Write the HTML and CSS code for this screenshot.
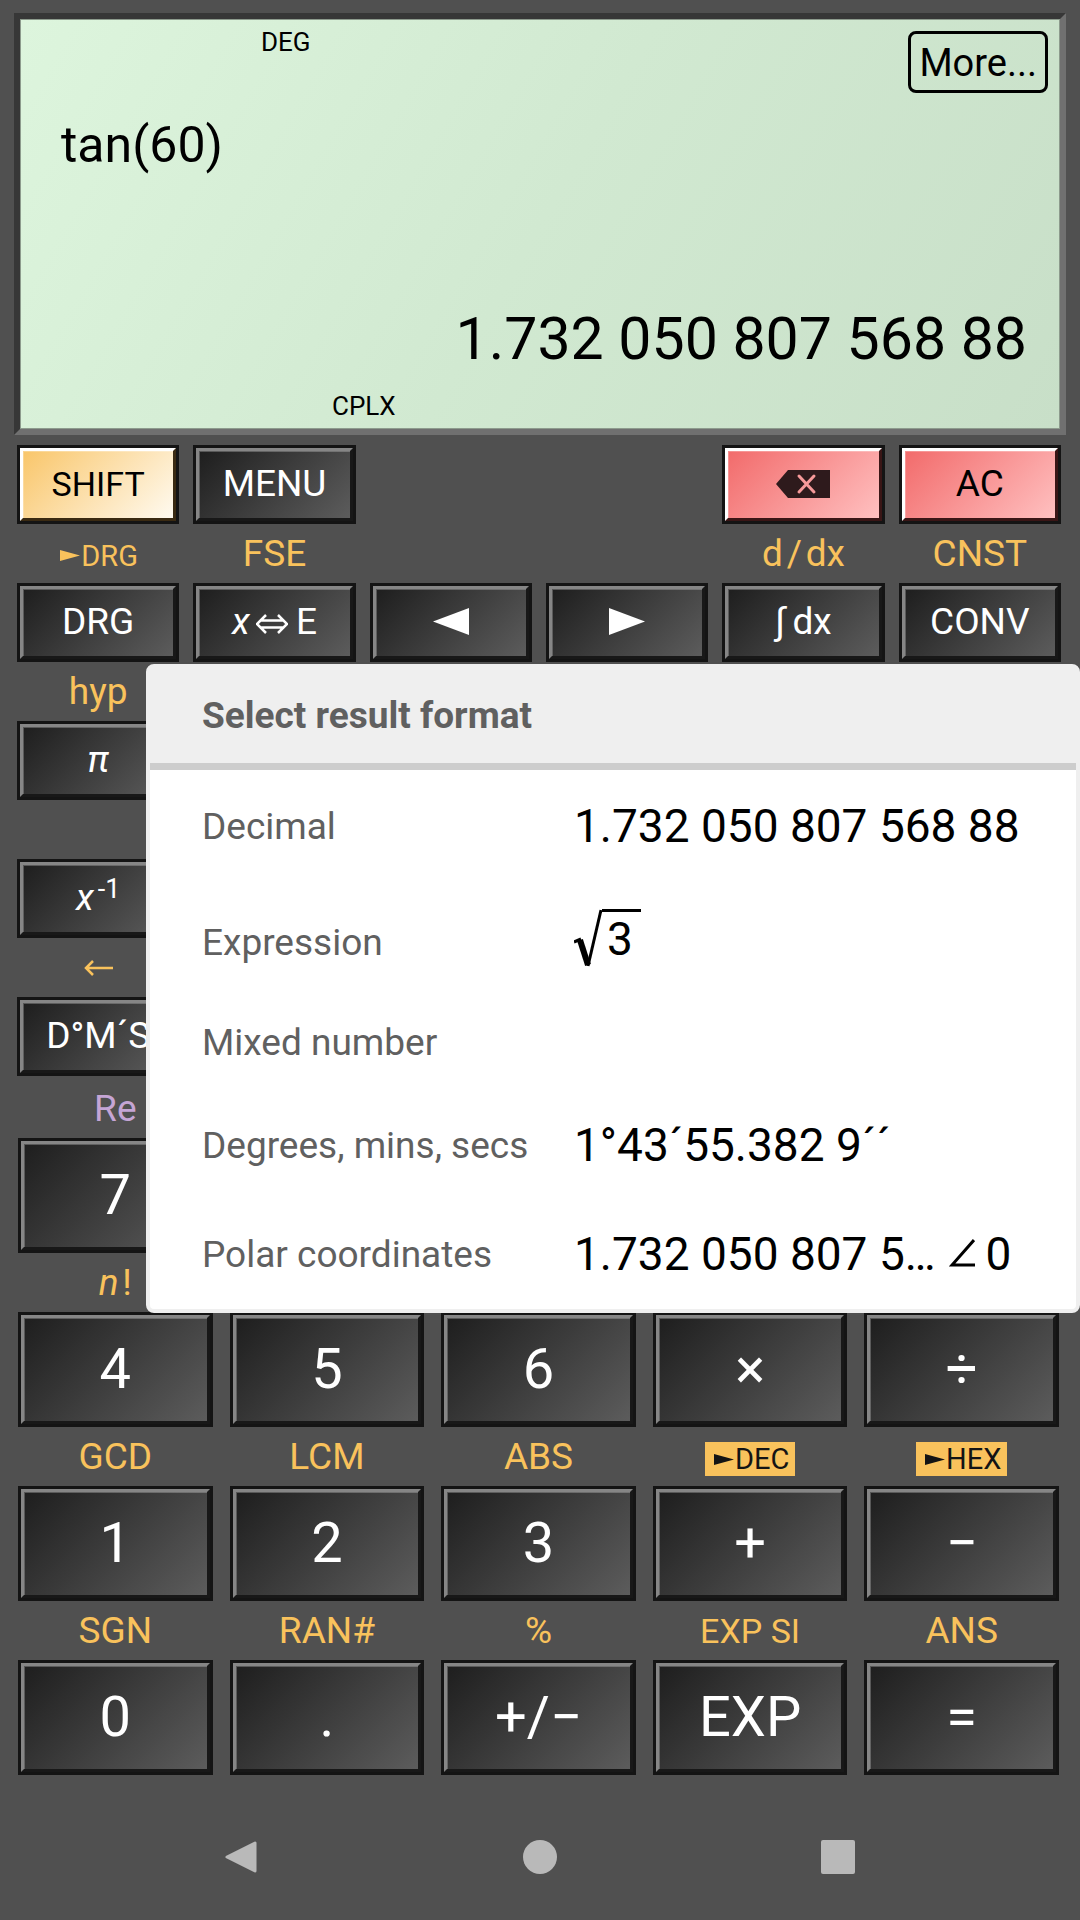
FILE: index.html
```html
<!DOCTYPE html>
<html lang="en">
<head>
<meta charset="utf-8">
<meta name="viewport" content="width=device-width, initial-scale=1">
<title>Calculator</title>
<link rel="stylesheet" href="styles.css">
</head>
<body>
<main class="calculator">
  <section class="display">
    <div class="display-top">
      <span class="indicator indicator-angle">DEG</span>
      <button class="more" type="button">More...</button>
    </div>
    <div class="entry">tan(60)</div>
    <output class="result">1.732 050 807 568 88</output>
    <span class="indicator indicator-complex">CPLX</span>
  </section>

  <section class="keys keys-function">
    <button class="key key-shift" type="button">SHIFT</button>
    <button class="key" type="button">MENU</button>
    <button class="key key-red col-5" type="button" aria-label="Backspace">
      <svg width="56" height="28" viewBox="0 0 56 28"><path d="M1 14 13 0H55V28H13Z" fill="#2e1a1c"/><path d="M24 6 39 22M39 6 24 22" stroke="#f79a9a" stroke-width="3" stroke-linecap="round"/></svg>
    </button>
    <button class="key key-red" type="button">AC</button>

    <span class="label label-small"><svg class="pointer" width="20" height="11" viewBox="0 0 20 11"><path d="M0 0 20 5.500 0 11Z" fill="currentColor"/></svg>DRG</span>
    <span class="label">FSE</span>
    <span class="label col-5">d&#8202;/&#8202;dx</span>
    <span class="label">CNST</span>

    <button class="key" type="button">DRG</button>
    <button class="key" type="button"><i>x</i><svg class="swap" width="32" height="20" viewBox="0 0 32 20" fill="none" stroke="currentColor" stroke-width="2.500"><path d="M10 1 1 10 10 19M22 1 31 10 22 19M5 6.500H27M5 13.500H27"/></svg>E</button>
    <button class="key" type="button" aria-label="Left"><svg width="36" height="27" viewBox="0 0 36 27"><path d="M36 0V27L0 13.500Z" fill="#fff"/></svg></button>
    <button class="key" type="button" aria-label="Right"><svg width="36" height="27" viewBox="0 0 36 27"><path d="M0 0V27L36 13.500Z" fill="#fff"/></svg></button>
    <button class="key" type="button">∫&#8201;dx</button>
    <button class="key" type="button">CONV</button>

    <span class="label col-1">hyp</span>
    <button class="key col-1" type="button"><i>π</i></button>
    <span class="label col-1"></span>
    <button class="key col-1" type="button"><i>x</i><span class="power">-1</span></button>
    <span class="label col-1"><svg width="29" height="16" viewBox="0 0 29 16" fill="none" stroke="currentColor" stroke-width="2.500"><path d="M9 1 2 8 9 15M2 8H29"/></svg></span>
    <button class="key col-1" type="button">D°M´S</button>
  </section>

  <section class="keys keys-number">
    <span class="label label-complex col-1">Re</span>
    <button class="key col-1" type="button">7</button>
    <span class="label col-1"><i>n</i>&#8202;!</span>

    <button class="key col-1" type="button">4</button>
    <button class="key" type="button">5</button>
    <button class="key" type="button">6</button>
    <button class="key" type="button">×</button>
    <button class="key" type="button">÷</button>

    <span class="label">GCD</span>
    <span class="label">LCM</span>
    <span class="label">ABS</span>
    <span class="label"><span class="badge"><svg class="pointer" width="20" height="11" viewBox="0 0 20 11"><path d="M0 0 20 5.500 0 11Z" fill="currentColor"/></svg>DEC</span></span>
    <span class="label"><span class="badge"><svg class="pointer" width="20" height="11" viewBox="0 0 20 11"><path d="M0 0 20 5.500 0 11Z" fill="currentColor"/></svg>HEX</span></span>

    <button class="key" type="button">1</button>
    <button class="key" type="button">2</button>
    <button class="key" type="button">3</button>
    <button class="key" type="button">+</button>
    <button class="key" type="button">−</button>

    <span class="label">SGN</span>
    <span class="label">RAN#</span>
    <span class="label">%</span>
    <span class="label label-medium">EXP SI</span>
    <span class="label">ANS</span>

    <button class="key" type="button">0</button>
    <button class="key" type="button">.</button>
    <button class="key" type="button">+/−</button>
    <button class="key" type="button">EXP</button>
    <button class="key" type="button">=</button>
  </section>

  <section class="dialog" role="dialog" aria-labelledby="dialog-title">
    <h1 class="dialog-title" id="dialog-title">Select result format</h1>
    <div class="formats">
      <button class="format" type="button"><span class="format-name">Decimal</span><span class="format-value">1.732 050 807 568 88</span></button>
      <button class="format format-expression" type="button"><span class="format-name">Expression</span><span class="format-value radical"><svg width="28" height="58" viewBox="0 0 28 58" fill="none" stroke="#000"><path d="M0 33 7 30" stroke-width="3"/><path d="M6 31 14 56" stroke-width="6"/><path d="M14 57 27 1" stroke-width="3"/></svg><span class="radicand">3</span></span></button>
      <button class="format" type="button"><span class="format-name">Mixed number</span></button>
      <button class="format" type="button"><span class="format-name">Degrees, mins, secs</span><span class="format-value">1°43´55.382 9´´</span></button>
      <button class="format" type="button"><span class="format-name">Polar coordinates</span><span class="format-value">1.732 050 807 5…<svg class="angle" width="26" height="34" viewBox="0 0 26 34" fill="none" stroke="#000" stroke-width="3"><path d="M25 1 3 26H26"/></svg>0</span></button>
    </div>
  </section>
</main>

<nav class="system-nav">
  <button class="nav-button" type="button" aria-label="Back"><svg width="36" height="36" viewBox="0 0 36 36"><path d="M3 18 31 4V32Z" fill="#b9b9b9" stroke="#b9b9b9" stroke-width="3" stroke-linejoin="round"/></svg></button>
  <button class="nav-button" type="button" aria-label="Home"><svg width="36" height="36" viewBox="0 0 36 36"><circle cx="18" cy="18" r="17" fill="#b9b9b9"/></svg></button>
  <button class="nav-button" type="button" aria-label="Recents"><svg width="36" height="36" viewBox="0 0 36 36"><rect x="1" y="1" width="34" height="34" rx="2" fill="#b9b9b9"/></svg></button>
</nav>
</body>
</html>
```

FILE: styles.css
```css
* {
  box-sizing: border-box;
}

body {
  display: flex;
  flex-direction: column;
  min-height: 100vh;
  margin: 0;
  background: #505050;
  color: #fff;
  font-family: Roboto, "Liberation Sans", sans-serif;
}

button {
  margin: 0;
  padding: 0;
  border: 0;
  background: none;
  color: inherit;
  font: inherit;
}

svg {
  flex: none;
}

.calculator {
  position: relative;
  display: flow-root;
}

/* Display */

.display {
  display: flex;
  flex-direction: column;
  min-height: 422px;
  margin: 13px 14px 10px;
  padding: 8px 12px;
  border: 6px solid;
  border-color: #373737 #707070 #707070 #373737;
  background: linear-gradient(120deg, #ddf5dd, #d1e9d1 50%, #c8dfc8);
  box-shadow: inset 0 0 0 1px #8d9b8d;
  color: #000;
}

.display-top {
  display: flex;
  align-items: flex-start;
  justify-content: space-between;
}

.indicator {
  font-size: 26px;
  line-height: 30px;
}

.indicator-angle {
  margin-left: 229px;
}

.indicator-complex {
  margin-left: 300px;
}

.more {
  height: 62px;
  margin-top: 4px;
  padding: 2px 8px 0;
  border: 3px solid #000;
  border-radius: 8px;
  font-size: 38px;
  line-height: 54px;
}

.entry {
  margin: 22px 29px 0;
  font-size: 50px;
  line-height: 60px;
}

.result {
  margin: auto 21px 17px;
  font-size: 59px;
  line-height: 70px;
  text-align: right;
}

/* Keys */

.keys {
  display: grid;
}

.keys-function {
  grid-template-columns: repeat(6, 1fr);
  grid-auto-rows: 79px 59px;
  column-gap: 14px;
  padding: 0 19px 0 17px;
}

.keys-number {
  grid-template-columns: repeat(5, 1fr);
  grid-auto-rows: 59px 115px;
  column-gap: 17px;
  padding: 3px 21px 0 18px;
}

.col-1 {
  grid-column-start: 1;
}

.col-5 {
  grid-column-start: 5;
}

.key {
  display: flex;
  align-items: center;
  justify-content: center;
  margin: 3px;
  padding-bottom: 2px;
  border: 3px solid;
  border-color: #868686 #181818 #181818 #868686;
  background: linear-gradient(135deg, #1e1e1e, #5c5c5c);
  box-shadow: 0 0 0 3px #141414, inset 1px 1px 0 rgba(255, 255, 255, 0.25);
  font-size: 37px;
  line-height: 44px;
}

.keys-number .key {
  font-size: 56px;
  line-height: 66px;
}

.key-shift {
  border-color: #fff #3a2a12 #3a2a12 #fff;
  background: linear-gradient(135deg, #f9c66a, #fffaf0);
  color: #000;
  font-size: 34px;
}

.key-red {
  border-color: #fff #3a1616 #3a1616 #fff;
  background: linear-gradient(135deg, #f26b6b, #ffc0c0);
  color: #000;
}

.power {
  padding: 0 0 18px 4px;
  font-size: 27px;
  line-height: 30px;
}

.swap {
  margin: 4px 8px 0 6px;
}

.label {
  display: flex;
  align-items: center;
  justify-content: center;
  color: #f9c25c;
  font-size: 37px;
  line-height: 44px;
}

.label-small {
  padding: 4px 0 0 2px;
  font-size: 29px;
}

.label-medium {
  font-size: 34px;
}

.label-complex {
  color: #c5a5d5;
}

.pointer {
  margin-right: 1px;
}

.badge {
  display: flex;
  align-items: center;
  height: 34px;
  margin-top: 5px;
  padding: 0 6px 0 9px;
  background: #f9c25c;
  color: #141414;
  font-size: 29px;
}

/* Result format dialog */

.dialog {
  position: absolute;
  top: 664px;
  right: 0;
  left: 146px;
  border: 4px solid #efefef;
  border-radius: 8px;
  background: #fff;
}

.dialog-title {
  margin: 0;
  padding: 26px 52px;
  background: #efefef;
  box-shadow: 0 7px 0 #cdcdcd;
  color: #606060;
  font-size: 37px;
  font-weight: 700;
  line-height: 43px;
}

.formats {
  display: flex;
  flex-direction: column;
  padding-top: 9px;
}

.format {
  display: grid;
  grid-template-columns: 372px 1fr;
  align-items: center;
  padding: 27px 0 27px 52px;
  text-align: left;
  white-space: nowrap;
}

.format-expression {
  align-items: baseline;
  padding-top: 28px;
}

.format-name {
  color: #606060;
  font-size: 37px;
  line-height: 43px;
}

.format-value {
  color: #000;
  font-size: 46px;
  line-height: 55px;
}

.radical {
  display: flex;
}

.radicand {
  align-self: baseline;
  padding: 0 8px 0 5px;
  border-top: 3px solid #000;
}

.angle {
  margin: 0 11px 0 13px;
  vertical-align: -3px;
}

/* System navigation */

.system-nav {
  display: flex;
  height: 126px;
  margin-top: auto;
  padding: 0 93px;
}

.nav-button {
  display: flex;
  flex: 1;
  align-items: center;
  justify-content: center;
}
```
